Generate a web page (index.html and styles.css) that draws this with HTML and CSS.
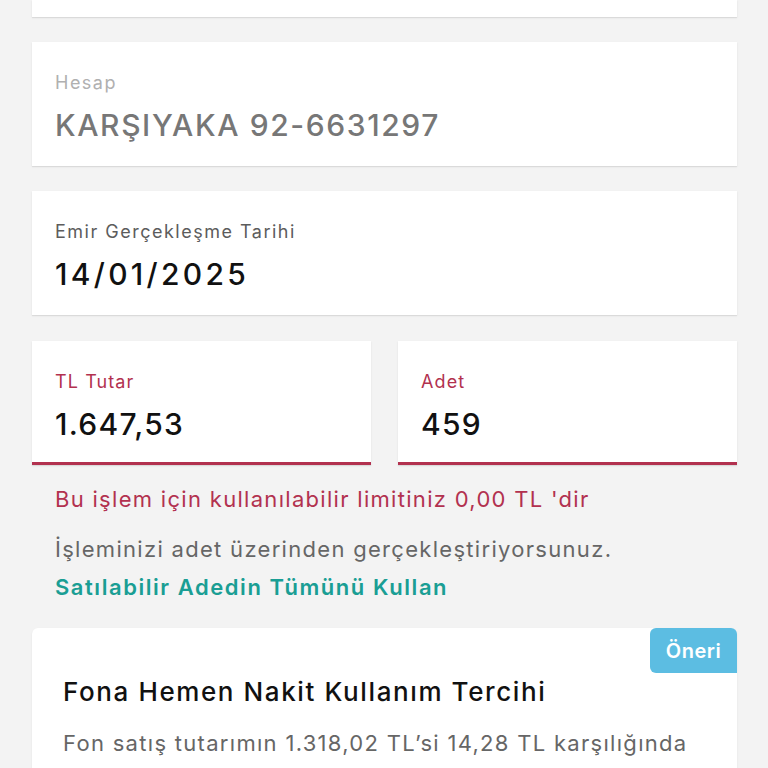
FILE: index.html
```html
<!DOCTYPE html>
<html lang="tr">
<head>
<meta charset="utf-8">
<link rel="stylesheet" href="styles.css">
</head>
<body>
<div class="page">
  <div class="card card-top"></div>

  <div class="card field">
    <div class="label label-light">Hesap</div>
    <div class="value value-gray">KARŞIYAKA 92-6631297</div>
  </div>

  <div class="card field">
    <div class="label">Emir Gerçekleşme Tarihi</div>
    <div class="value value-date">14/01/2025</div>
  </div>

  <div class="pair">
    <div class="card field field-err">
      <div class="label label-red">TL Tutar</div>
      <div class="value value-num">1.647,53</div>
    </div>
    <div class="card field field-err">
      <div class="label label-red">Adet</div>
      <div class="value value-num">459</div>
    </div>
  </div>

  <div class="notes">
    <div class="err-text">Bu işlem için kullanılabilir limitiniz 0,00 TL 'dir</div>
    <div class="info-text">İşleminizi adet üzerinden gerçekleştiriyorsunuz.</div>
    <div class="link-text">Satılabilir Adedin Tümünü Kullan</div>
  </div>

  <div class="card promo">
    <span class="badge">Öneri</span>
    <div class="promo-title">Fona Hemen Nakit Kullanım Tercihi</div>
    <div class="promo-body">Fon satış tutarımın 1.318,02 TL’si 14,28 TL karşılığında</div>
  </div>
</div>
</body>
</html>
```

FILE: styles.css
```css
html, body {
  margin: 0;
  padding: 0;
  background: #f3f3f3;
  font-family: Inter, "Open Sans", sans-serif;
  overflow: hidden;
}

.page {
  width: 705px;
  margin: 0 0 0 32px;
  display: flex;
  flex-direction: column;
  gap: 25px;
}

.card {
  background: #fff;
  box-shadow: 0 1px 1px rgba(0,0,0,0.08), 0 1px 3px rgba(0,0,0,0.04);
}

.card-top {
  height: 17px;
}

.field {
  height: 124px;
  box-sizing: border-box;
  padding: 29px 23px 0;
}

.label {
  font-size: 18px;
  line-height: 24px;
  letter-spacing: 1.5px;
  color: #5c5c5c;
}

.label-light { color: #b0b0b0; }
.label-red { color: #b2314f; letter-spacing: 1.1px; }

.value {
  margin-top: 11px;
  font-size: 30px;
  line-height: 38px;
  font-weight: 500;
  letter-spacing: 1.6px;
  color: #111;
}

.value-gray { color: #777; }
.value-date { letter-spacing: 3.3px; }
.value-num { letter-spacing: 1.3px; }

.pair {
  display: flex;
  gap: 27px;
  margin-top: 1px;
}

.pair .field {
  flex: 1;
  border-bottom: 3px solid #b2314f;
}

.notes {
  display: flex;
  flex-direction: column;
  padding-left: 23px;
  margin-top: -6px;
}

.err-text {
  font-size: 22px;
  line-height: 30px;
  letter-spacing: 1.3px;
  color: #b2314f;
}

.info-text {
  margin-top: 20px;
  font-size: 22px;
  line-height: 30px;
  letter-spacing: 1.3px;
  color: #666;
}

.link-text {
  margin-top: 8px;
  font-size: 22px;
  line-height: 30px;
  font-weight: 600;
  letter-spacing: 1.55px;
  color: #1a9e94;
}

.promo {
  position: relative;
  margin-top: 1px;
  height: 160px;
  padding: 47px 31px 0;
  border-radius: 6px 6px 0 0;
}

.badge {
  position: absolute;
  top: 0;
  right: 0;
  width: 87px;
  height: 45px;
  border-radius: 6px 6px 0 6px;
  background: #5cbde2;
  color: #fff;
  font-size: 20px;
  font-weight: 600;
  letter-spacing: 0.5px;
  display: flex;
  align-items: center;
  justify-content: center;
}

.promo-title {
  font-size: 26px;
  line-height: 34px;
  font-weight: 500;
  letter-spacing: 1.6px;
  color: #111;
}

.promo-body {
  margin-top: 19px;
  font-size: 22px;
  line-height: 30px;
  letter-spacing: 1.3px;
  color: #666;
}
```
